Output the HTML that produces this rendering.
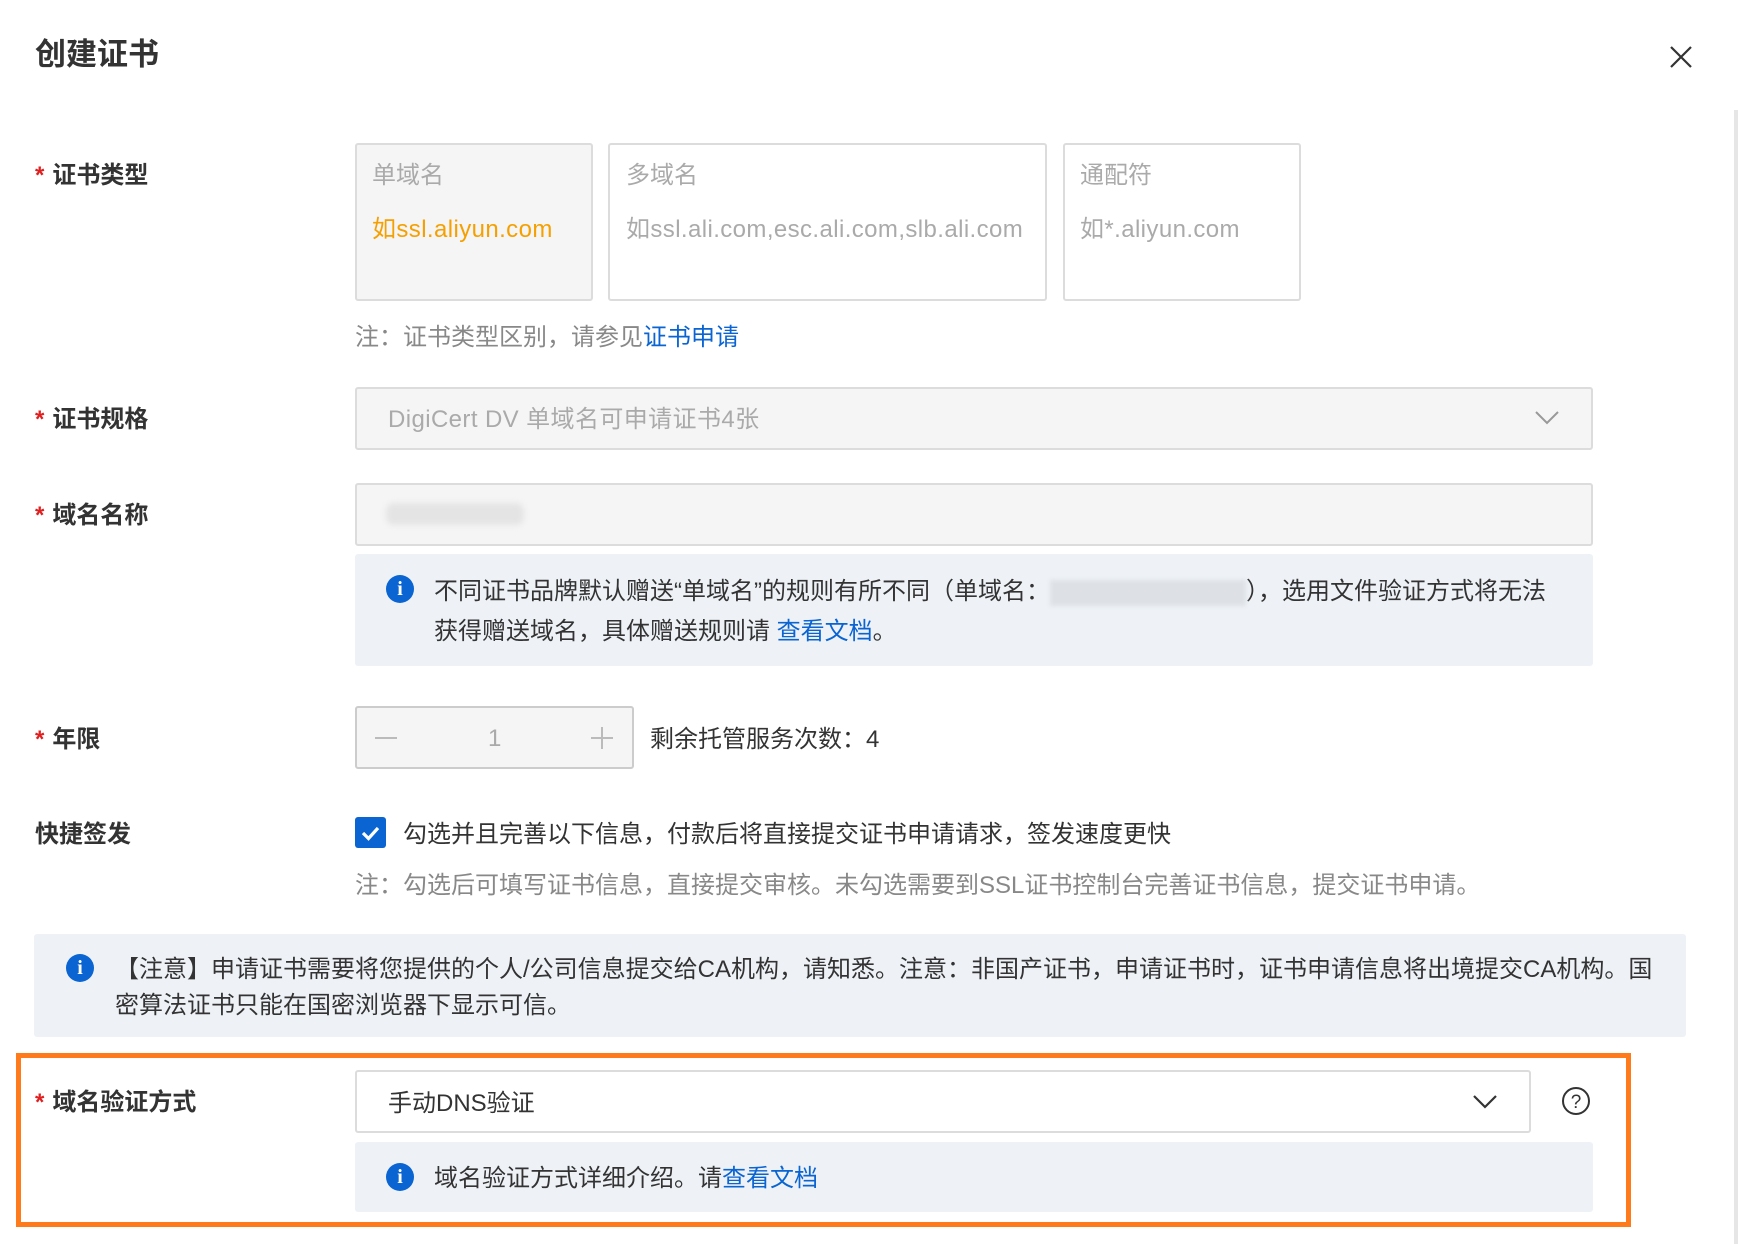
<!DOCTYPE html>
<html><head><meta charset="utf-8"><style>
*{margin:0;padding:0;box-sizing:border-box}
body{width:1738px;height:1244px;background:#fff;font-family:"Liberation Sans","Noto Sans CJK SC",sans-serif;color:#333;position:relative;overflow:hidden;font-size:24px}
.a{position:absolute;white-space:nowrap}
.lbl{position:absolute;left:35px;font-weight:bold;font-size:24px;line-height:30px}
.lbl b{color:#e02020;margin-right:8px;font-weight:bold}
.box{position:absolute;border:2px solid #dcdcdc;border-radius:3px}
.info{position:absolute;background:#eef2f7;border-radius:3px}
.blue{color:#0a64d2}
.ic{position:absolute;width:28px;height:28px;border-radius:50%;background:#0a64d2;color:#fff;font:bold 20px/28px "Liberation Serif",serif;text-align:center}
.ls{letter-spacing:0.4px}
</style></head><body>
<div class="a" style="left:35px;top:36px;font-size:31px;font-weight:bold;line-height:38px">创建证书</div>
<svg class="a" style="left:1670px;top:46px" width="22" height="22"><path d="M1 1L21 21M21 1L1 21" stroke="#333" stroke-width="2.2"/></svg>
<div class="a" style="left:1734px;top:110px;width:4px;height:1134px;background:#e6e6e6"></div>

<div class="lbl" style="top:161px"><b>*</b>证书类型</div>
<div class="box" style="left:355px;top:143px;width:238px;height:158px;background:#f5f5f5"></div>
<div class="box" style="left:608px;top:143px;width:439px;height:158px"></div>
<div class="box" style="left:1063px;top:143px;width:238px;height:158px"></div>
<div class="a" style="left:372px;top:162px;color:#aaa;line-height:28px">单域名</div>
<div class="a ls" style="left:372px;top:216px;color:#f5a000;line-height:28px">如ssl.aliyun.com</div>
<div class="a" style="left:626px;top:162px;color:#aaa;line-height:28px">多域名</div>
<div class="a ls" style="left:626px;top:216px;color:#aaa;line-height:28px">如ssl.ali.com,esc.ali.com,slb.ali.com</div>
<div class="a" style="left:1080px;top:162px;color:#aaa;line-height:28px">通配符</div>
<div class="a ls" style="left:1080px;top:216px;color:#aaa;line-height:28px">如*.aliyun.com</div>
<div class="a" style="left:355px;top:324px;color:#888;line-height:28px">注：证书类型区别，请参见<span class="blue">证书申请</span></div>

<div class="lbl" style="top:405px"><b>*</b>证书规格</div>
<div class="box" style="left:355px;top:387px;width:1238px;height:63px;background:#f5f5f5"></div>
<div class="a ls" style="left:388px;top:406px;color:#aaa;line-height:28px">DigiCert DV 单域名可申请证书4张</div>
<svg class="a" style="left:1535px;top:410px" width="24" height="16"><path d="M1 2L12 13L23 2" stroke="#999" stroke-width="2" fill="none"/></svg>

<div class="lbl" style="top:501px"><b>*</b>域名名称</div>
<div class="box" style="left:355px;top:483px;width:1238px;height:63px;background:#f5f5f5"></div>
<div class="a" style="left:386px;top:503px;width:138px;height:22px;background:#e4e4e4;border-radius:8px;filter:blur(3px)"></div>
<div class="info" style="left:355px;top:554px;width:1238px;height:112px"></div>
<div class="ic" style="left:386px;top:575px">i</div>
<div class="a" style="left:434px;top:577px;line-height:30px">不同证书品牌默认赠送“单域名”的规则有所不同（单域名：<span style="display:inline-block;width:196px;height:26px;vertical-align:middle;background:#dde1e6;filter:blur(2px)"></span>），选用文件验证方式将无法</div>
<div class="a" style="left:434px;top:617px;line-height:30px">获得赠送域名，具体赠送规则请 <span class="blue">查看文档</span>。</div>

<div class="lbl" style="top:725px"><b>*</b>年限</div>
<div class="box" style="left:355px;top:706px;width:279px;height:63px;background:#f5f5f5;border-color:#ccc"></div>
<div class="a" style="left:375px;top:737px;width:22px;height:2px;background:#bbb"></div>
<div class="a" style="left:488px;top:724px;color:#aaa;line-height:30px">1</div>
<div class="a" style="left:591px;top:737px;width:22px;height:2px;background:#bbb"></div>
<div class="a" style="left:601px;top:727px;width:2px;height:22px;background:#bbb"></div>
<div class="a" style="left:650px;top:725px;line-height:30px">剩余托管服务次数：4</div>

<div class="lbl" style="top:820px">快捷签发</div>
<div class="a" style="left:355px;top:817px;width:31px;height:31px;background:#0a64d2;border-radius:3px"></div>
<svg class="a" style="left:355px;top:817px" width="31" height="31"><path d="M8 16L13.5 21.5L23 11" stroke="#fff" stroke-width="3.2" fill="none"/></svg>
<div class="a" style="left:403px;top:820px;line-height:30px">勾选并且完善以下信息，付款后将直接提交证书申请请求，签发速度更快</div>
<div class="a" style="left:355px;top:871px;color:#888;line-height:30px">注：勾选后可填写证书信息，直接提交审核。未勾选需要到SSL证书控制台完善证书信息，提交证书申请。</div>

<div class="info" style="left:34px;top:934px;width:1652px;height:103px"></div>
<div class="ic" style="left:66px;top:954px">i</div>
<div class="a" style="left:115px;top:955px;line-height:30px">【注意】申请证书需要将您提供的个人/公司信息提交给CA机构，请知悉。注意：非国产证书，申请证书时，证书申请信息将出境提交CA机构。国</div>
<div class="a" style="left:115px;top:991px;line-height:30px">密算法证书只能在国密浏览器下显示可信。</div>

<div class="a" style="left:16px;top:1053px;width:1615px;height:174px;border:5px solid #ff7a1a"></div>
<div class="lbl" style="top:1088px"><b>*</b>域名验证方式</div>
<div class="box" style="left:355px;top:1070px;width:1176px;height:63px"></div>
<div class="a" style="left:388px;top:1089px;line-height:30px">手动DNS验证</div>
<svg class="a" style="left:1473px;top:1094px" width="24" height="16"><path d="M1 2L12 13L23 2" stroke="#333" stroke-width="2.2" fill="none"/></svg>
<svg class="a" style="left:1561px;top:1086px" width="30" height="30"><circle cx="15" cy="15" r="13" stroke="#333" stroke-width="2" fill="none"/><text x="15" y="22" text-anchor="middle" font-family="Liberation Sans" font-size="19" fill="#333">?</text></svg>
<div class="info" style="left:355px;top:1142px;width:1238px;height:70px"></div>
<div class="ic" style="left:386px;top:1163px">i</div>
<div class="a" style="left:434px;top:1164px;line-height:30px">域名验证方式详细介绍。请<span class="blue">查看文档</span></div>
</body></html>
